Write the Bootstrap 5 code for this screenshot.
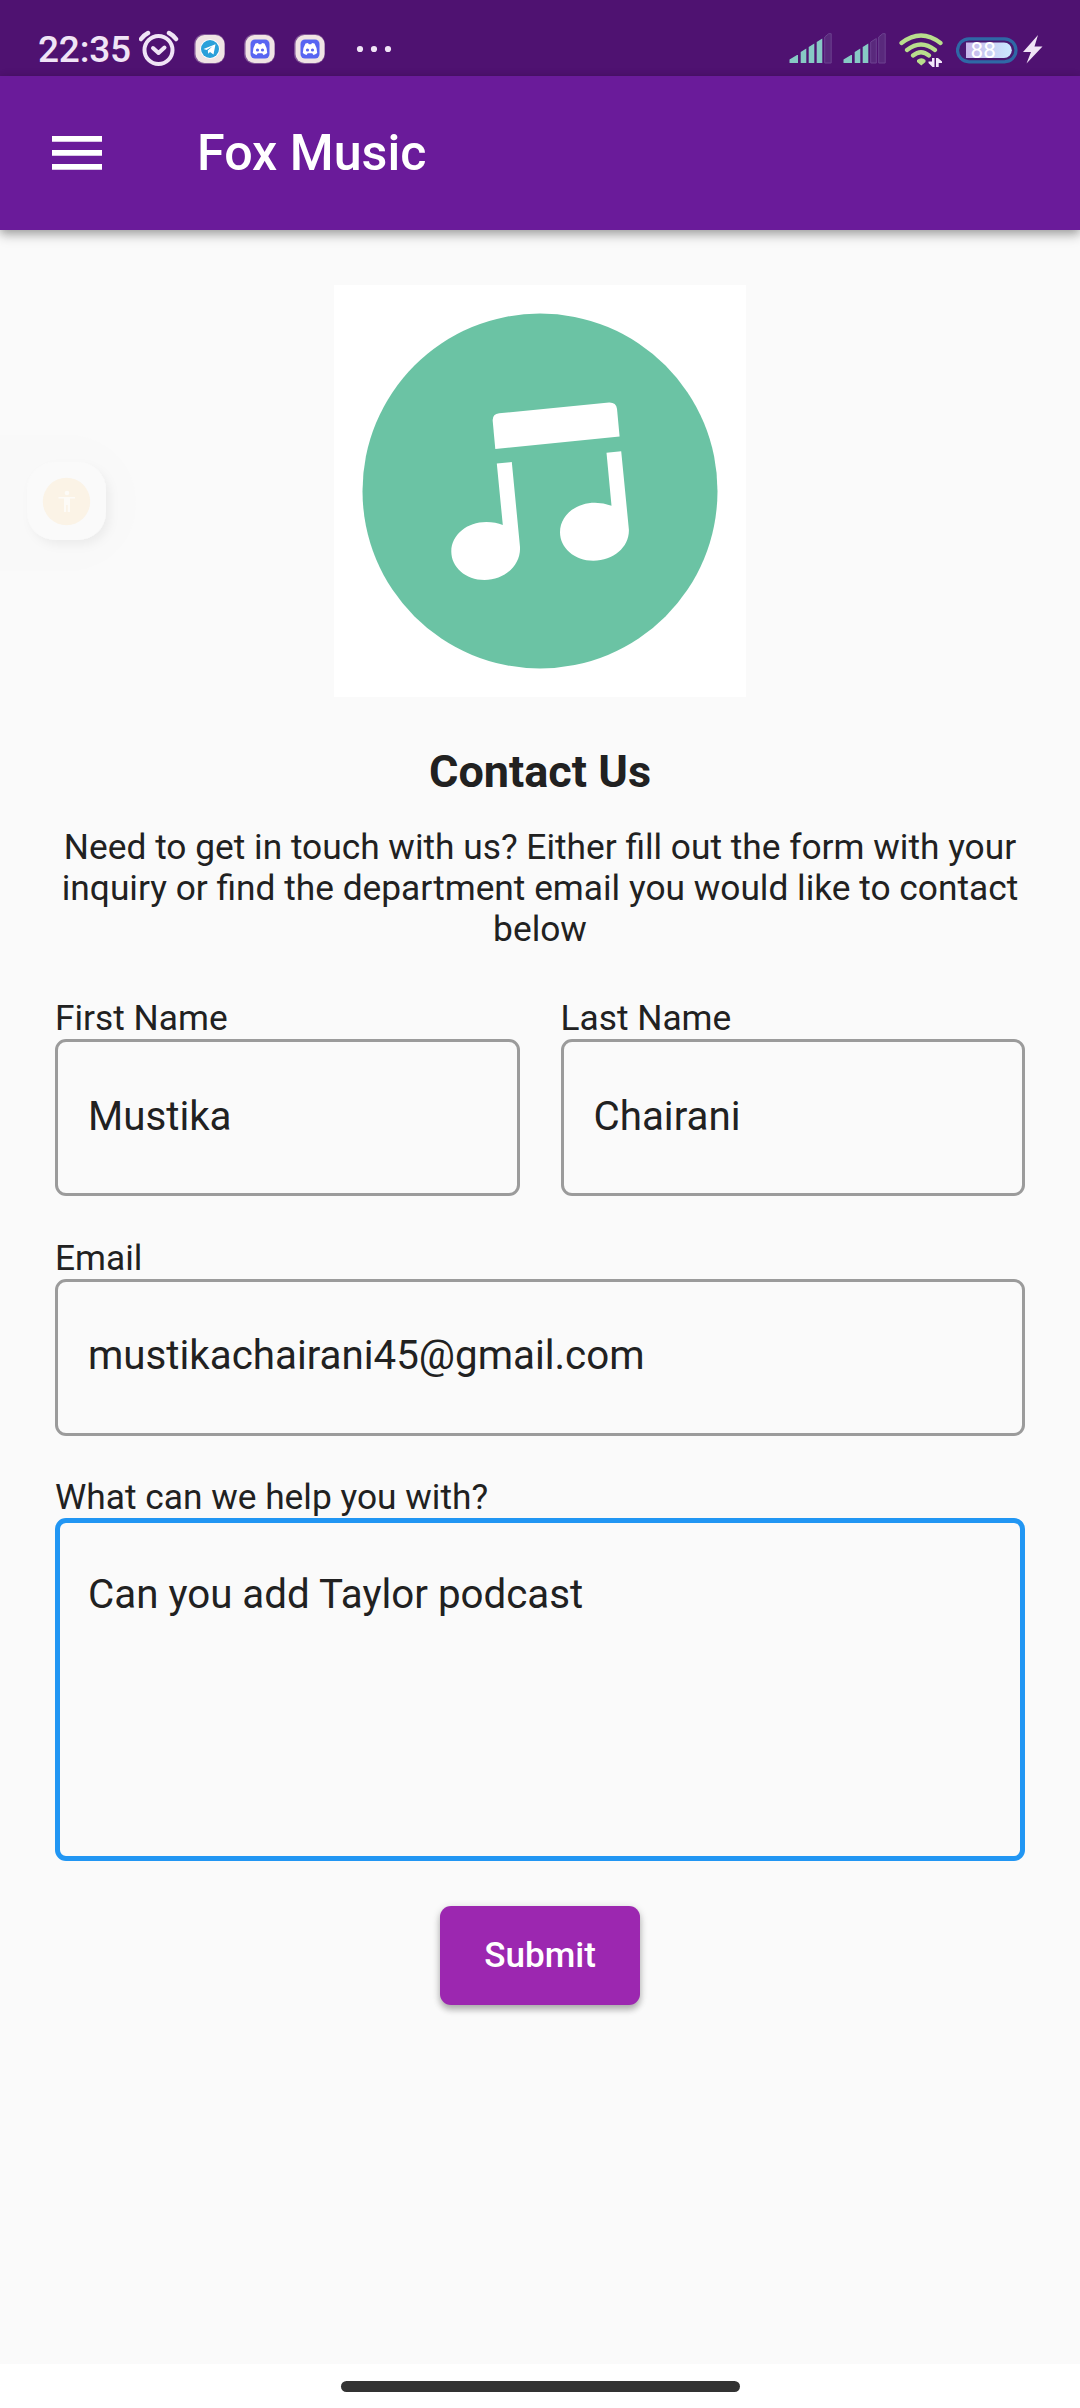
<!DOCTYPE html>
<html lang="en">
<head>
<meta charset="utf-8">
<meta name="viewport" content="width=device-width, initial-scale=1">
<title>Fox Music</title>
<link href="https://cdn.jsdelivr.net/npm/bootstrap@5.3.0/dist/css/bootstrap.min.css" rel="stylesheet">
<style>
  body { font-family: Roboto, sans-serif; font-size: 35.3px; line-height: 41px; color: #212121; background: #fafafa; }
  .screen { width: 1080px; height: 2408px; }
  .status-strip { height: 76px; background: #4f1271; padding-left: 38px; }
  .clock { font-size: 37px; font-weight: 500; line-height: 44px; color: #f0e4f6; width: 101px; padding-top: 23px; letter-spacing: -.2px; }
  .app-header { height: 154px; background: #6a1b9a; padding: 0 0 0 52px; box-shadow: 0 5px 11px rgba(0,0,0,.28), 0 2px 8px rgba(0,0,0,.14); }
  .app-name { font-size: 50.2px; font-weight: 500; line-height: 58px; margin-left: 95px; }
  .page-body { padding: 55px 55px 0; }
  .logo-art { width: 412px; height: 412px; }
  .page-title { font-size: 45px; line-height: 52px; font-weight: 700; margin: 49px 0 0; }
  .intro { margin: 29px -4px 48px; }
  .pair { --bs-gutter-x: 41px; }
  .field-label { display: block; height: 41px; margin: 0; white-space: nowrap; }
  .form-control.field { font-size: 40.3px; line-height: 46px; height: 157px; border: 3px solid #9b9b9b; border-radius: 11px; background: transparent; color: #212121; padding: 0 30px 3px; }
  .form-control.field-area { height: 343px; border: 5px solid #2196f3; padding: 49px 28px; resize: none; overflow: hidden; }
  .field-gap { margin-top: 41.500px; }
  .submit-btn { width: 200px; height: 99px; margin-top: 44.5px; background: #9c27b0; color: #fff; border: 0; border-radius: 11px; font-size: 35.1px; line-height: 41px; font-weight: 500; padding: 0; box-shadow: 0 5px 6px rgba(0,0,0,.22), 0 2px 8px rgba(0,0,0,.16); }
  .gesture-strip { height: 44px; background: #fff; padding-top: 17px; }
  .gesture-pill { width: 399px; height: 11px; border-radius: 6px; background: #333; }
  .assist { left: 0; top: 432px; }
  svg { display: block; flex: none; }
</style>
</head>
<body>
<div class="screen d-flex flex-column position-relative overflow-hidden">
  <div class="status-strip d-flex align-items-center">
    <div class="clock">22:35</div>
    <svg width="55" height="76" viewBox="139 0 55 76" fill="none" stroke="#f0e4f6" stroke-linecap="round" stroke-linejoin="round">
      <circle cx="158.5" cy="50" r="14" stroke-width="4"/><path d="M153 48l5.5 5 6-5.500" stroke-width="4"/><path d="M141 39q3-4 7-6M169 33q4 2 7 6" stroke-width="4.500"/>
    </svg>
    <svg width="136" height="76" viewBox="194 0 136 76">
      <defs>
        <g id="discord">
          <rect x="-16" y="-15" width="31" height="30" rx="10" fill="#bea8c8" opacity=".45"/>
          <rect x="-14.500" y="-14" width="29" height="28" rx="9" fill="#f0e4e4"/>
          <rect x="-9.500" y="-9.500" width="19" height="19" rx="4.500" fill="#5865f2"/>
          <path d="M-4.500-5.500L-2-6l.8 1.300h2.400L2-6l2.500.500Q7.300-1 7.200 4 5.400 5.500 3.400 6L2.300 4.300h-4.600L-3.400 6Q-5.400 5.500-7.200 4-7.300-1-4.500-5.500z" fill="#fff"/>
          <circle cx="-2.500" cy="1" r="1.600" fill="#5865f2"/><circle cx="2.500" cy="1" r="1.600" fill="#5865f2"/>
        </g>
      </defs>
      <rect x="194" y="34" width="31" height="30" rx="10" fill="#bea8c8" opacity=".45"/>
      <rect x="195.500" y="35" width="29" height="28" rx="9" fill="#f0e4e4"/>
      <circle cx="210" cy="49" r="9.800" fill="#fff"/><circle cx="210" cy="49" r="9" fill="#2ba0da"/>
      <path d="M203.500 49l12-4.700-2 10.200-3.500-2.500-1.800 1.700-.4-3.200 4.700-4.200-6 3.800z" fill="#fff"/>
      <use href="#discord" x="260" y="49"/><use href="#discord" x="310" y="49"/>
    </svg>
    <svg width="70" height="76" viewBox="330 0 70 76" fill="#f0e4f6"><circle cx="360" cy="49" r="3.100"/><circle cx="374" cy="49" r="3.100"/><circle cx="388" cy="49" r="3.100"/></svg>
    <svg class="ms-auto" width="110" height="76" viewBox="789 0 110 76">
      <g fill="#87c9c5"><path d="M789.500 63v-3.500l7.500-4.500h1V63zM800.700 63V52l5.600-3.500V63zM808.700 63V47l5.600-3.500V63zM816.700 63V42l5.600-3.500V63z"/></g>
      <path d="M824.700 63V37l4-3.300h2.500V63z" fill="#59297c" stroke="#6c4290"/>
      <g fill="#87c9c5"><path d="M843.500 63v-3.500l7.500-4.500h1V63zM854.700 63V52l5.600-3.500V63zM862.700 63V47l5.600-3.500V63z"/></g>
      <path d="M870.700 63V42l5.600-3.500V63zM878.700 63V37l4-3.300h2.500V63z" fill="#59297c" stroke="#6c4290"/>
    </svg>
    <svg width="57" height="76" viewBox="899 0 57 76">
      <g fill="none" stroke="#b9de8d" stroke-width="4.200" stroke-linecap="round"><path d="M901.500 43q19.500-15 39 0M907 50q14-11 28 0M913 55.500q8-6.500 16 0"/></g>
      <path d="M917 60q4.500-3.500 8.500 0v2l-4.200 3.500-4.300-3.500z" fill="#b9de8d"/>
      <path d="M932 58h2.500v9h-2l-4-4v-1.500h3.500zM936 67v-9h2l4 3.500v1.500h-3.300v4z" fill="#f3e8fa"/>
    </svg>
    <svg width="124" height="76" viewBox="956 0 124 76">
      <defs><linearGradient id="charge"><stop stop-color="#c7b5e9"/><stop offset="1" stop-color="#cceaff"/></linearGradient></defs>
      <rect x="957.500" y="38.800" width="58.500" height="23" rx="11.500" fill="#4a1971" stroke="#2f68a6" stroke-width="3.200"/>
      <path d="M966 42.500h38a7.800 7.800 0 0 1 0 15.600h-38z" fill="url(#charge)"/>
      <text x="970.500" y="57.800" font-family="Roboto, sans-serif" font-size="22.500" fill="#fff">88</text>
      <path d="M1038 35l-15 17h8l-4.500 11.500 16-17h-8z" fill="#f0e4f6"/>
    </svg>
  </div>

  <nav class="app-header d-flex align-items-center text-white flex-shrink-0">
    <svg width="50" height="34" viewBox="0 0 50 34" fill="#fff"><path d="M0 0h50v5.700H0zM0 14h50v5.700H0zM0 28h50v5.700H0z"/></svg>
    <span class="app-name">Fox Music</span>
  </nav>

  <main class="page-body flex-grow-1">
    <svg class="logo-art mx-auto" viewBox="334 285 412 412">
      <path d="M334 285h412v412H334z" fill="#fff"/>
      <circle cx="540" cy="491" r="177.500" fill="#6bc3a4"/>
      <g fill="#fff">
        <path d="M495.300 449L492.700 421q-.5-7 6.500-7.700L609 402.400q7-.3 8 6.300L619.600 436.500z"/>
        <path d="M496.800 463.500l15-1.500 8.200 85c1 19-16 33-35.500 33-19 0-33.200-13-33.200-28.500 0-17 16-29.500 35-29.500q9.500 0 16.500 3z"/>
        <path d="M606.500 452.800l14.700-1.600 7.700 78.500c.5 17-15 31-35.500 31-19 0-33.400-13-33.400-28.500 0-17 16-29.500 35-29.500q8.500 0 16.500 3z"/>
      </g>
    </svg>
    <h1 class="page-title text-center">Contact Us</h1>
    <p class="intro text-center">Need to get in touch with us? Either fill out the form with your inquiry or find the department email you would like to contact below</p>
    <form>
      <div class="row pair">
        <div class="col-6">
          <label class="field-label" for="first">First Name</label>
          <input class="form-control field" id="first" type="text" value="Mustika">
        </div>
        <div class="col-6">
          <label class="field-label" for="last">Last Name</label>
          <input class="form-control field" id="last" type="text" value="Chairani">
        </div>
      </div>
      <div class="field-gap">
        <label class="field-label" for="mail">Email</label>
        <input class="form-control field" id="mail" type="text" value="mustikachairani45@gmail.com">
      </div>
      <div class="field-gap">
        <label class="field-label" for="msg">What can we help you with?</label>
        <textarea class="form-control field field-area" id="msg" spellcheck="false">Can you add Taylor podcast</textarea>
      </div>
      <button class="btn submit-btn d-block mx-auto" type="button">Submit</button>
    </form>
  </main>

  <div class="gesture-strip flex-shrink-0"><div class="gesture-pill mx-auto"></div></div>

  <svg class="assist position-absolute" width="140" height="142" viewBox="0 432 140 142">
    <defs><filter id="soft" x="-30%" y="-30%" width="170%" height="170%"><feDropShadow dx="4" dy="5" stdDeviation="5" flood-opacity=".05"/></filter></defs>
    <path d="M0 435h68a67 67 0 0 1 0 136H0z" fill="#f9f9f9"/>
    <rect x="27" y="462" width="79" height="78" rx="28" fill="#fafafa" filter="url(#soft)"/>
    <circle cx="66.500" cy="501.500" r="23.700" fill="#fbf3e6"/>
    <g fill="#fdfbf7"><circle cx="67" cy="493" r="2.300"/><path d="M58.500 497h16.500v1.500h-5V512h-2.300v-7h-1.600v7H64v-13.500h-5.500z"/></g>
  </svg>
</div>
<script src="https://cdn.jsdelivr.net/npm/bootstrap@5.3.0/dist/js/bootstrap.bundle.min.js"></script>
</body>
</html>
